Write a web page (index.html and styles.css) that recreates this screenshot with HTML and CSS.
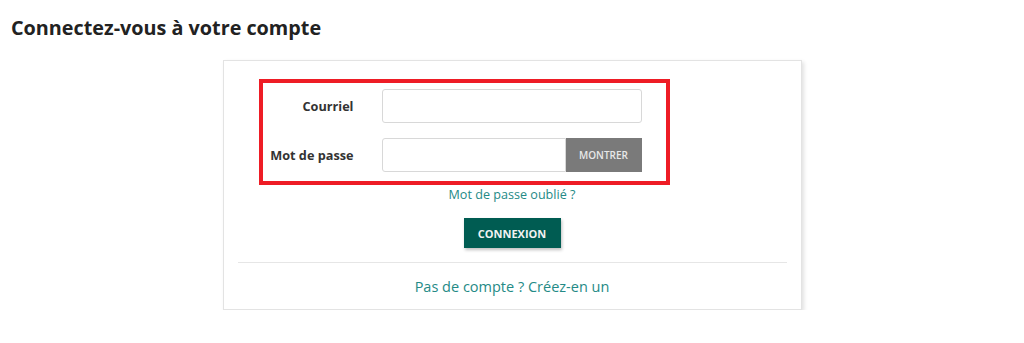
FILE: index.html
```html
<!DOCTYPE html>
<html lang="fr">
<head>
<meta charset="utf-8">
<title>Connexion</title>
<link rel="stylesheet" href="styles.css">
</head>
<body>
<main class="page">
  <h1 class="title">Connectez-vous à votre compte</h1>
  <section class="card">
    <form class="login">
      <div class="fields">
        <label class="label" for="email">Courriel</label>
        <input class="input" id="email" type="email">
        <label class="label" for="pw">Mot de passe</label>
        <div class="pw-group">
          <input class="input pw-input" id="pw" type="password">
          <button type="button" class="show-btn">MONTRER</button>
        </div>
      </div>
      <a class="forgot" href="#">Mot de passe oublié ?</a>
      <button type="submit" class="submit">CONNEXION</button>
    </form>
    <hr class="sep">
    <a class="signup" href="#">Pas de compte ? Créez-en un</a>
  </section>
</main>
</body>
</html>
```

FILE: styles.css
```css
* { box-sizing: border-box; }
html, body { margin: 0; padding: 0; background: #fff; }
body {
  font-family: "Open Sans", "Noto Sans", "Liberation Sans", sans-serif;
  color: #333;
}
.page { padding: 12px 11px 0; }
.title {
  margin: 0;
  font-size: 19.8px;
  font-weight: 700;
  line-height: 32px;
  color: #222;
}
.card {
  width: 579px;
  margin: 16px auto 0;
  background: #fff;
  border: 1px solid #e3e3e3;
  box-shadow: 2px 2px 4px rgba(0,0,0,0.12);
  padding: 18px 14px 0;
  display: flex;
  flex-direction: column;
  align-items: center;
}
.login {
  width: 100%;
  display: flex;
  flex-direction: column;
  align-items: center;
}
.fields {
  align-self: flex-start;
  margin-left: 21px;
  width: 411px;
  border: 4px solid #ee1c25;
  padding: 6px 0 9px;
  display: grid;
  grid-template-columns: 91px 260px;
  column-gap: 28px;
  row-gap: 15px;
  align-items: center;
}
.label {
  text-align: right;
  font-size: 12.7px;
  font-weight: 700;
  color: #333;
}
.input {
  height: 34px;
  width: 100%;
  border: 1px solid #d8d8d8;
  border-radius: 3px;
  background: #fff;
  margin: 0;
  padding: 0 8px;
  font: inherit;
}
.pw-group { display: flex; height: 34px; }
.pw-input {
  width: 184px;
  border-radius: 3px 0 0 3px;
}
.show-btn {
  width: 76px;
  height: 34px;
  border: 0;
  margin: 0;
  background: #7a7a7a;
  color: #e8e8e8;
  font-family: inherit;
  font-size: 10px;
  font-weight: 600;
  padding: 0;
}
.forgot {
  margin-top: 1px;
  font-size: 12.6px;
  line-height: 18px;
  color: #248a86;
  text-decoration: none;
}
.submit {
  margin-top: 14px;
  width: 97px;
  height: 30px;
  border: 0;
  background: #005c52;
  color: #f2f2f2;
  font-family: inherit;
  font-size: 11px;
  font-weight: 700;
  box-shadow: 1px 2px 3px rgba(0,0,0,0.25);
  padding: 0;
}
.sep {
  width: 100%;
  margin: 14px 0 0;
  border: 0;
  border-top: 1px solid #e6e6e6;
}
.signup {
  font-size: 14.5px;
  line-height: 20px;
  color: #248a86;
  text-decoration: none;
  margin: 14px 0 12px;
}
```
